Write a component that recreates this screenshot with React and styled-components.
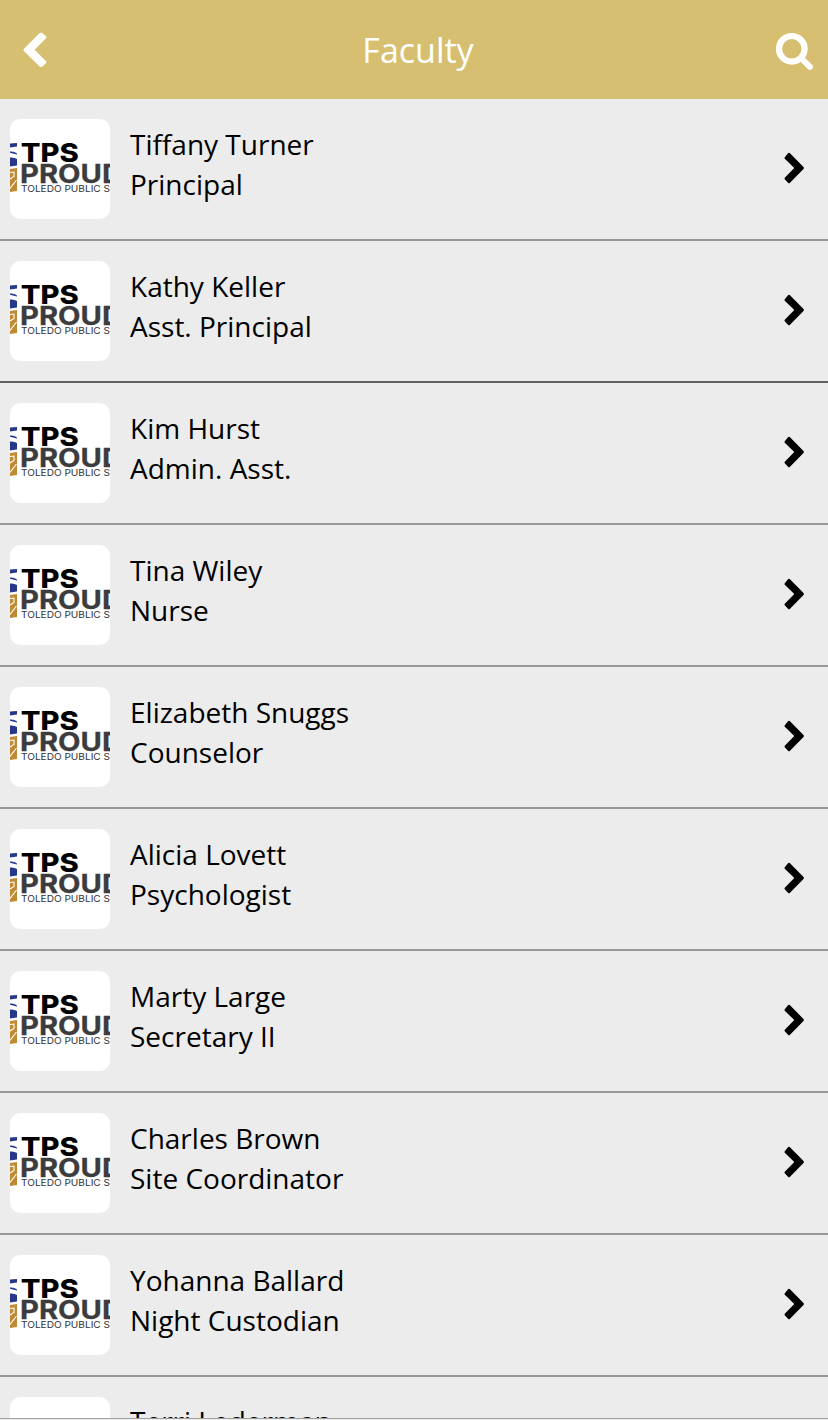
import React from "react";
import styled, { createGlobalStyle } from "styled-components";

const Global = createGlobalStyle`
  *{box-sizing:border-box}
  body{margin:0;background:#ececec;}
`;
const Screen = styled.div`
  display:flex;flex-direction:column;width:828px;height:1420px;overflow:hidden;
  background:#ececec;color:#000;font-family:"Open Sans","Noto Sans",sans-serif;
`;
const Header = styled.header`
  flex:none;height:99px;padding:0 14px 0 22px;background:#d6bf70;color:#fff;
  display:grid;grid-template-columns:100px 1fr 100px;align-items:center;
`;
const Title = styled.h1`
  margin:0;padding-top:1px;text-align:center;font-size:34px;line-height:46px;font-weight:400;
`;
const IconButton = styled.button`
  display:flex;justify-content:${p => p.$end ? "flex-end" : "flex-start"};
  border:0;padding:${p => p.$end ? "3px 0 0" : "0"};background:none;color:inherit;
  svg{display:block}
`;
const List = styled.ul`
  flex:1;min-height:0;margin:0 0 1px;padding:0;list-style:none;overflow:hidden;border-bottom:1px solid #a0a0a0;
`;
const Details = styled.div`
  flex:1;padding:5px 0 0 20px;font-size:28px;line-height:40px;white-space:nowrap;
`;
const Row = styled.li`
  display:flex;height:142px;padding:20px 24px 0 10px;
  border-bottom:2px solid ${p => p.$dark ? "#626262" : "#989898"};
  &:last-child ${Details}{padding-top:4px}
`;
const Avatar = styled.div`
  width:100px;height:100px;border-radius:10px;background:#fff;overflow:hidden;
  svg{display:block}
`;
const Line = styled.div``;
const Arrow = styled.span`
  padding-top:33px;
  svg{display:block}
`;
const Mark = styled.text.attrs({ lengthAdjust: "spacingAndGlyphs" })`
  font-family:"Inter",sans-serif;
`;

const Logo = () => (
  <svg width="100" height="100" viewBox="0 0 100 100">
    <path d="M0 24.5L7 24V27.5L0 28.5ZM0 32.5Q4 32 7 34.5V35.5L0 33.8ZM0 38.5Q4 38 7 40V46.5L0 47.5Z" fill="#27378a" />
    <path d="M0 50L7 49V72L0 73Z" fill="#c08a35" />
    <path d="M0 53.5L4 53V57.5L0 60M0 69.5L6.5 61" fill="none" stroke="#fff" strokeWidth="1.1" />
    <Mark x="10.8" y="43.2" fontSize="25.5" fontWeight="800" fill="#000" textLength="58">TPS</Mark>
    <Mark x="10" y="64.3" fontSize="25" fontWeight="700" fill="#3c3c3e" stroke="#3c3c3e" strokeWidth=".3" textLength="103">PROUD</Mark>
    <Mark x="11" y="72.6" fontSize="9" fill="#333" textLength="89">TOLEDO PUBLIC S</Mark>
  </svg>
);

const Back = () => (
  <svg width="26" height="38" viewBox="0 0 26 38">
    <path d="M1.8 18L17.6 2Q19 .9 20.3 2L24 5.2Q25 6.2 24 7.2L12.7 18.7L24 30.2Q25 31.2 24 32.2L20.3 35.5Q19 36.6 17.6 35.5L1.8 20Q1 19 1.8 18Z" fill="currentColor" />
  </svg>
);
const Search = () => (
  <svg width="38" height="39" viewBox="0 0 38 39" fill="none" stroke="currentColor">
    <circle cx="15.8" cy="16.8" r="12.8" strokeWidth="6.2" />
    <path d="M26 27L33.9 34.9" strokeWidth="6" strokeLinecap="round" />
  </svg>
);
const Chevron = () => (
  <svg width="20" height="32" viewBox="0 0 20 32">
    <path d="M1 5L4 1.2Q5 .2 6 1.2L19.5 15Q20.2 16 19.5 17L6 30.8Q5 31.8 4 30.8L1 27.5Q0 26.5 1 25.5L10.3 16L1 7Q0 6 1 5Z" />
  </svg>
);

const people = [
  ["Tiffany Turner", "Principal"],
  ["Kathy Keller", "Asst. Principal"],
  ["Kim Hurst", "Admin. Asst."],
  ["Tina Wiley", "Nurse"],
  ["Elizabeth Snuggs", "Counselor"],
  ["Alicia Lovett", "Psychologist"],
  ["Marty Large", "Secretary II"],
  ["Charles Brown", "Site Coordinator"],
  ["Yohanna Ballard", "Night Custodian"],
  ["Terri Lederman", ""],
];

export default function App() {
  return (
    <Screen>
      <Global />
      <Header>
        <IconButton aria-label="Back"><Back /></IconButton>
        <Title>Faculty</Title>
        <IconButton $end aria-label="Search"><Search /></IconButton>
      </Header>
      <List>
        {people.map(([name, role], i) => (
          <Row key={name} $dark={i === 1}>
            <Avatar><Logo /></Avatar>
            <Details><Line>{name}</Line><Line>{role}</Line></Details>
            <Arrow><Chevron /></Arrow>
          </Row>
        ))}
      </List>
    </Screen>
  );
}
